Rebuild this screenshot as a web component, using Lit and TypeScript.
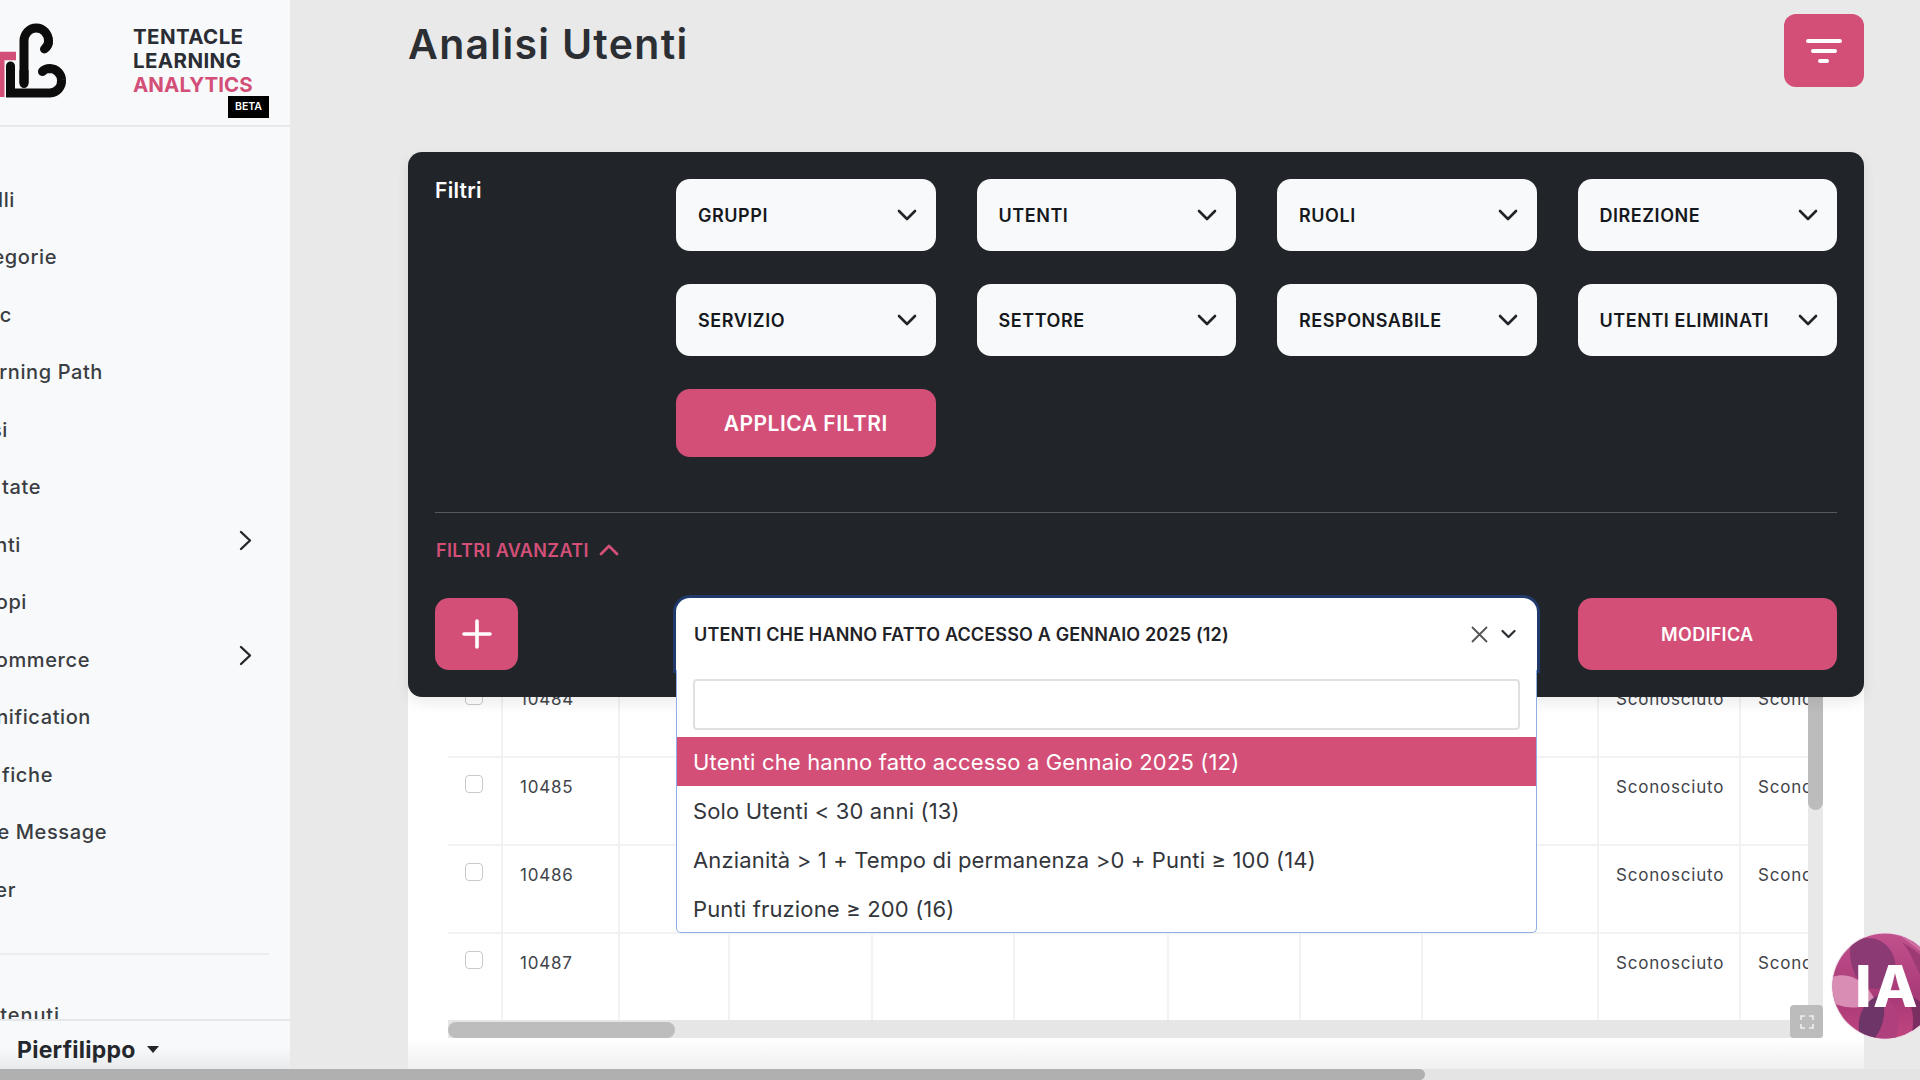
import { LitElement, html, css } from "lit";
import { customElement } from "lit/decorators.js";

const chevDown = html`<svg class="chev" viewBox="0 0 20 12" width="20" height="12"><path d="M2 2l8 8 8-8" fill="none" stroke="#212529" stroke-width="2.6" stroke-linecap="round" stroke-linejoin="round"/></svg>`;

const nav: { t: string; e: number; c?: boolean }[] = [
  { t: "lli", e: 15 }, { t: "egorie", e: 57 }, { t: "c", e: 12 }, { t: "rning Path", e: 103 },
  { t: "si", e: 8 }, { t: "tate", e: 41 }, { t: "nti", e: 21, c: true }, { t: "opi", e: 27 },
  { t: "ommerce", e: 90, c: true }, { t: "nification", e: 91 }, { t: "fiche", e: 53 },
  { t: "e Message", e: 107 }, { t: "er", e: 16 },
];
const cols = [55, 117, 110, 143, 142, 154, 132, 122, 176, 142, 120];
const ids = ["10484", "10485", "10486", "10487"];
const filters = ["GRUPPI", "UTENTI", "RUOLI", "DIREZIONE", "SERVIZIO", "SETTORE", "RESPONSABILE", "UTENTI ELIMINATI"];
const options = [
  "Utenti che hanno fatto accesso a Gennaio 2025 (12)",
  "Solo Utenti < 30 anni (13)",
  "Anzianità > 1 + Tempo di permanenza >0 + Punti ≥ 100 (14)",
  "Punti fruzione ≥ 200 (16)",
];

@customElement("app-root")
export class AppRoot extends LitElement {
  static styles = css`
    :host {
      display: block; width: 1920px; height: 1080px; overflow: hidden; position: relative;
      font-family: Inter, "Liberation Sans", sans-serif; background: #e9e9e9; color: #212529;
    }
    * { box-sizing: border-box; }
    .shell { display: grid; grid-template-columns: 290px 1fr; height: 1069px; }
    .side { background: #f8f9fa; display: flex; flex-direction: column; overflow: hidden; height: 1069px; }
    .brand { height: 127px; flex: none; border-bottom: 2px solid #e8e9ea; display: flex; }
    .mark { width: 133px; flex: none; }
    .brand-text { font-weight: 700; font-size: 20.5px; line-height: 24px; padding-top: 25px; letter-spacing: .4px; display: flex; flex-direction: column; position: relative; color: #2a2d33; flex: 1; }
    .brand-text .pink { color: #d34f78; letter-spacing: .05px; }
    .beta { position: absolute; left: 95px; top: 96px; background: #000; color: #fff; font-size: 10.5px; font-weight: 600; letter-spacing: 0; line-height: 1; width: 41px; height: 22px; display: flex; align-items: center; justify-content: center; }
    .brand-text span { white-space: nowrap; }
    .nav { flex: 1; min-height: 0; overflow: hidden; padding-top: 44px; }
    .item { height: 57.5px; display: flex; align-items: center; font-size: 20px; font-weight: 500; color: #3a3d42; letter-spacing: .6px; }
    .item .t { display: flex; justify-content: flex-end; white-space: nowrap; flex: none; }
    .item .ar { margin-left: auto; margin-right: 38px; margin-bottom: 9px; display: block; }
    .sep { height: 2px; background: #eeeeef; width: 269px; margin: 34px 0 48px; }
    .clipt { font-size: 20px; font-weight: 500; color: #3a3d42; display: flex; justify-content: flex-end; width: 60px; letter-spacing: .9px; line-height: 24px; }
    .user { height: 50px; flex: none; border-top: 2px solid #e6e7e8; display: flex; align-items: center; gap: 11px; padding: 9px 0 0 17px; font-weight: 700; font-size: 23px; letter-spacing: .25px; color: #24272c; background: linear-gradient(#f8f9fa 55%, #e9eaeb); }
    .caret { width: 0; height: 0; border-left: 6.5px solid transparent; border-right: 6.5px solid transparent; border-top: 7px solid #24272c; }

    .main { padding: 0 56px 0 118px; display: flex; flex-direction: column; min-width: 0; }
    .top { height: 152px; flex: none; display: flex; justify-content: space-between; align-items: flex-start; padding-top: 14px; }
    h1 { margin: 7px 0 0; font-size: 41px; line-height: 46px; font-weight: 600; color: #2b2e33; letter-spacing: 1.3px; }
    .fbtn { width: 80px; height: 73px; border-radius: 12px; background: #d34f78; display: flex; align-items: center; justify-content: center; }

    .panel { background: #212529; border-radius: 14px; padding: 27px; height: 545px; flex: none; position: relative; z-index: 2; margin-bottom: -27px; box-shadow: 0 6px 14px rgba(0,0,0,.08); }
    .grid { display: grid; grid-template-columns: 200px repeat(4, 1fr); column-gap: 41px; }
    .filtri { color: #fff; font-weight: 600; font-size: 21px; letter-spacing: .3px; line-height: 24px; grid-row: span 3; }
    .sel { height: 72px; border-radius: 14px; background: #f8f9fa; display: flex; align-items: center; justify-content: space-between; padding: 0 19px 0 22px; font-weight: 600; font-size: 18px; color: #15181c; white-space: nowrap; margin-bottom: 33px; letter-spacing: .55px; }
    .apply { height: 68px; border-radius: 14px; background: #d34f78; color: #fff; font-weight: 600; font-size: 21px; display: flex; align-items: center; justify-content: center; letter-spacing: .5px; }
    .rule { height: 1px; background: #565a5f; margin-top: 55px; }
    .adv { display: flex; align-items: center; gap: 10px; color: #d34f78; font-weight: 600; font-size: 18px; height: 24px; margin: 25px 0 0 1px; letter-spacing: .35px; }
    .row-adv { margin-top: 36px; }
    .plus { height: 72px; width: 83px; border-radius: 14px; background: #d34f78; display: flex; align-items: center; justify-content: center; }
    .combo { grid-column: 2 / span 3; position: relative; height: 72px; background: #fff; border-radius: 14px 14px 0 0; box-shadow: 0 0 0 3px #1f3a6b; display: flex; align-items: center; padding: 0 21px 0 18px; font-weight: 600; font-size: 18px; color: #1f2226; letter-spacing: .15px; white-space: nowrap; }
    .combo .label { flex: 1; }
    .combo .x { margin-right: 12px; display: block; }
    .drop { position: absolute; left: 0; right: 0; top: 72px; height: 263px; background: #fff; border: 1px solid #8fb0e4; border-top: none; border-radius: 0 0 5px 5px; padding: 9px 0 0; z-index: 3; font-weight: 400; }
    .search { height: 51px; margin: 0 16px 7px; border: 2px solid #dfe0e1; border-radius: 4px; background: #fff; }
    .opt { height: 49px; display: flex; align-items: center; padding: 0 16px; font-size: 22px; font-weight: 400; color: #33363b; letter-spacing: .15px; }
    .opt.on { background: #d34f78; color: #fff; }
    .mod { height: 72px; border-radius: 14px; background: #d34f78; color: #fff; font-weight: 600; font-size: 18px; letter-spacing: .3px; display: flex; align-items: center; justify-content: center; }

    .card { height: 399px; flex: none; position: relative; padding: 0 41px 0 40px; background: linear-gradient(#fff 92%, #f0f0f0); }
    .tw { display: flex; height: 350px; }
    .clip { flex: 1; min-width: 0; overflow: hidden; }
    .tbl { display: grid; width: 1413px; }
    .cell { height: 88px; border-right: 2px solid #f2f2f3; border-bottom: 2px solid #f2f2f3; padding: 17px 17px 0; font-size: 17px; line-height: 24px; color: #41444a; letter-spacing: .8px; white-space: nowrap; }
    .cb { width: 18px; height: 18px; border: 1.5px solid #c9c9c9; border-radius: 4px; margin: 0; }
    .vs { width: 15px; flex: none; background: #e8e8e8; }
    .vs div { height: 113px; margin-top: 27px; background: #bcbcbc; border-radius: 0 0 8px 8px; }
    .hs { height: 18px; background: #e6e6e6; padding-top: 2px; }
    .hs div { width: 227px; height: 16px; background: #bdbdbd; border-radius: 8px; }
    .fs { position: absolute; right: 41px; top: 335px; width: 33px; height: 33px; background: #bcbcbc; border-radius: 4px; display: flex; align-items: center; justify-content: center; }

    .bar { height: 11px; background: #e4e4e4; }
    .bar div { width: 1425px; height: 11px; background: #b0b0b0; border-radius: 0 6px 6px 0; }
    .ia { position: absolute; left: 1831px; top: 932px; width: 108px; height: 108px; z-index: 5; }
    .ia svg { display: block; }
    .ia span { position: absolute; left: 24px; top: 0; line-height: 108px; font-size: 58px; font-weight: 800; color: #fff; letter-spacing: 1.5px; }
  `;

  render() {
    return html`
      <div class="shell">
        <aside class="side">
          <div class="brand">
            <div class="mark">
              <svg width="100" height="110" viewBox="0 0 100 110">
                <path d="M0 56H16" fill="none" stroke="#d34f78" stroke-width="8.5"/>
                <path d="M2 56V97" fill="none" stroke="#d34f78" stroke-width="5"/>
                <path d="M10.5 66V93H50A12 12 0 0 0 61.5 80 12 12 0 0 0 50 68.5Q45 68.5 42.5 71.5" fill="none" stroke="#0c0c0c" stroke-width="9" stroke-linecap="round"/>
                <path d="M10.5 66V93" fill="none" stroke="#0c0c0c" stroke-width="9"/>
                <path d="M24 83.5V41A12.2 13 0 0 1 48.5 41Q49 45 44.5 49" fill="none" stroke="#0c0c0c" stroke-width="9" stroke-linecap="round"/>
                <path d="M24 70V83.5" fill="none" stroke="#0c0c0c" stroke-width="9"/>
              </svg>
            </div>
            <div class="brand-text">
              <span>TENTACLE</span><span>LEARNING</span><span class="pink">ANALYTICS</span>
              <div class="beta">BETA</div>
            </div>
          </div>
          <div class="nav">
            ${nav.map(n => html`<div class="item"><div class="t" style="width:${n.e}px">${n.t}</div>${n.c ? html`<svg class="ar" width="13" height="21" viewBox="0 0 13 21"><path d="M2 2l9 8.5L2 19" fill="none" stroke="#24272c" stroke-width="2.4" stroke-linecap="round" stroke-linejoin="round"/></svg>` : ""}</div>`)}
            <div class="sep"></div>
            <div class="clipt">tenuti</div>
          </div>
          <div class="user"><span>Pierfilippo</span><div class="caret"></div></div>
        </aside>
        <main class="main">
          <div class="top">
            <h1>Analisi Utenti</h1>
            <div class="fbtn"><svg width="36" height="26" viewBox="0 0 36 26"><path d="M2 3H34M7 13H29M14 23H21" stroke="#fff" stroke-width="4" stroke-linecap="round" fill="none"/></svg></div>
          </div>
          <section class="panel">
            <div class="grid">
              <div class="filtri">Filtri</div>
              ${filters.map(f => html`<div class="sel"><span>${f}</span>${chevDown}</div>`)}
              <div class="apply">APPLICA FILTRI</div>
            </div>
            <div class="rule"></div>
            <div class="adv"><span>FILTRI AVANZATI</span><svg width="20" height="12" viewBox="0 0 20 12"><path d="M2 10l8-8 8 8" fill="none" stroke="#d34f78" stroke-width="2.8" stroke-linecap="round" stroke-linejoin="round"/></svg></div>
            <div class="grid row-adv">
              <div class="plus"><svg width="30" height="30" viewBox="0 0 30 30"><path d="M15 2V28M2 15H28" stroke="#fff" stroke-width="3.6" stroke-linecap="round"/></svg></div>
              <div class="combo">
                <span class="label">UTENTI CHE HANNO FATTO ACCESSO A GENNAIO 2025 (12)</span>
                <svg class="x" width="19" height="19" viewBox="0 0 19 19"><path d="M2 2L17 17M17 2L2 17" stroke="#555" stroke-width="1.8" fill="none"/></svg>
                <svg width="15" height="10" viewBox="0 0 15 10"><path d="M1.5 2l6 6 6-6" stroke="#2b2e33" stroke-width="2.2" fill="none" stroke-linecap="round" stroke-linejoin="round"/></svg>
                <div class="drop">
                  <div class="search"></div>
                  ${options.map((o, i) => html`<div class="opt ${i === 0 ? "on" : ""}">${o}</div>`)}
                </div>
              </div>
              <div class="mod">MODIFICA</div>
            </div>
          </section>
          <section class="card">
            <div class="tw">
              <div class="clip">
                <div class="tbl" style="grid-template-columns:${cols.map(c => c + "px").join(" ")}">
                  ${ids.map(id => cols.map((_, i) => html`<div class="cell">${i === 0 ? html`<div class="cb"></div>` : i === 1 ? id : i >= 9 ? "Sconosciuto" : ""}</div>`))}
                </div>
              </div>
              <div class="vs"><div></div></div>
            </div>
            <div class="hs"><div></div></div>
            <div class="fs"><svg width="14" height="14" viewBox="0 0 14 14"><path d="M1 5V1H5M9 1H13V5M13 9V13H9M5 13H1V9" fill="none" stroke="#eee" stroke-width="1.6"/></svg></div>
          </section>
        </main>
      </div>
      <div class="bar"><div></div></div>
      <div class="ia">
        <svg width="108" height="108" viewBox="0 0 107 107">
          <defs>
            <clipPath id="c"><circle cx="53.5" cy="53.5" r="52"/></clipPath>
            <linearGradient id="g" x1="0" y1="0" x2="0" y2="1"><stop offset="0" stop-color="#c2528e"/><stop offset=".6" stop-color="#a83a78"/><stop offset="1" stop-color="#c2457f"/></linearGradient>
          </defs>
          <circle cx="53.5" cy="53.5" r="53" fill="#ecdfe7"/>
          <g clip-path="url(#c)">
            <rect width="107" height="107" fill="url(#g)"/>
            <path d="M20 10C45 -2 66 15 64 40 62 55 50 60 34 54 22 46 16 25 20 10Z" fill="#8c3a74"/>
            <path d="M0 45C18 38 34 48 44 68 30 78 8 76 0 68Z" fill="#d98cb4"/>
            <path d="M62 0C80 10 92 25 107 30V0Z" fill="#cf6ea3"/>
            <path d="M70 10C85 25 84 50 107 60V35C95 30 85 18 70 10Z" fill="#9c3a76"/>
            <path d="M30 107C22 85 34 66 50 62 56 78 52 96 42 107Z" fill="#6d3568"/>
            <path d="M50 62C66 72 70 92 64 107H42C52 96 56 78 50 62Z" fill="#b0407d"/>
            <path d="M72 60C88 66 100 78 107 95V107H78C84 90 82 74 72 60Z" fill="#7a2f62"/>
            <path d="M0 70C10 85 18 98 30 107H0Z" fill="#e1b9cf"/>
          </g>
        </svg>
        <span>IA</span>
      </div>
    `;
  }
}
